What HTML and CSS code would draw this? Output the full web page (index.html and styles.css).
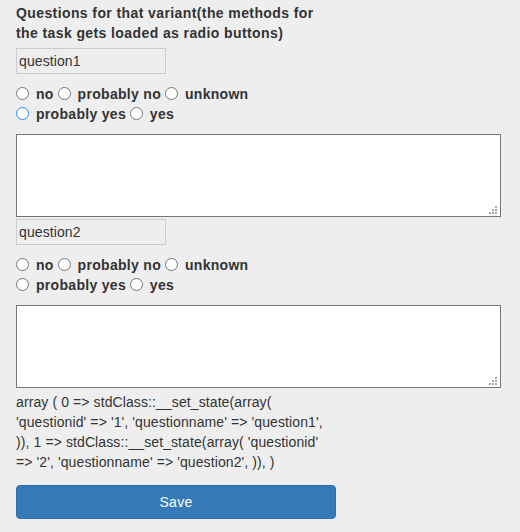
FILE: index.html
```html
<!DOCTYPE html>
<html>
<head>
<meta charset="utf-8">
<link rel="stylesheet" href="styles.css">
</head>
<body>
<form class="page">
  <div class="title">Questions for that variant(the methods for the task gets loaded as radio buttons)</div>

  <input class="qname" type="text" value="question1" disabled>
  <div class="choices">
    <label class="opt"><input type="radio" name="q1"><span>no</span></label>
    <label class="opt"><input type="radio" name="q1"><span>probably no</span></label>
    <label class="opt"><input type="radio" name="q1"><span>unknown</span></label>
    <label class="opt"><input type="radio" name="q1" class="focus"><span>probably yes</span></label>
    <label class="opt"><input type="radio" name="q1"><span>yes</span></label>
  </div>
  <div class="answer-wrap">
    <textarea class="answer"></textarea>
    <svg class="grip" width="8" height="8" viewBox="0 0 8 8"><rect x="6" y="0" width="2" height="2"/><rect x="3" y="3" width="2" height="2"/><rect x="6" y="3" width="2" height="2"/><rect x="0" y="6" width="2" height="2"/><rect x="3" y="6" width="2" height="2"/><rect x="6" y="6" width="2" height="2"/></svg>
  </div>

  <input class="qname" type="text" value="question2" disabled>
  <div class="choices">
    <label class="opt"><input type="radio" name="q2"><span>no</span></label>
    <label class="opt"><input type="radio" name="q2"><span>probably no</span></label>
    <label class="opt"><input type="radio" name="q2"><span>unknown</span></label>
    <label class="opt"><input type="radio" name="q2"><span>probably yes</span></label>
    <label class="opt"><input type="radio" name="q2"><span>yes</span></label>
  </div>
  <div class="answer-wrap">
    <textarea class="answer"></textarea>
    <svg class="grip" width="8" height="8" viewBox="0 0 8 8"><rect x="6" y="0" width="2" height="2"/><rect x="3" y="3" width="2" height="2"/><rect x="6" y="3" width="2" height="2"/><rect x="0" y="6" width="2" height="2"/><rect x="3" y="6" width="2" height="2"/><rect x="6" y="6" width="2" height="2"/></svg>
  </div>

  <div class="dump">array ( 0 =&gt; stdClass::__set_state(array( 'questionid' =&gt; '1', 'questionname' =&gt; 'question1', )), 1 =&gt; stdClass::__set_state(array( 'questionid' =&gt; '2', 'questionname' =&gt; 'question2', )), )</div>

  <button class="save" type="button">Save</button>
</form>
</body>
</html>
```

FILE: styles.css
```css
html, body {
  margin: 0;
  padding: 0;
  background: #eeeeee;
}
body {
  font-family: "Liberation Sans", Arial, sans-serif;
  font-size: 14px;
  line-height: 20px;
  color: #333333;
}
.page {
  display: flex;
  flex-direction: column;
  align-items: flex-start;
  padding: 3px 0 0 16px;
  margin: 0;
}
.title {
  font-weight: bold;
  width: 320px;
  letter-spacing: 0.4px;
}
.qname {
  box-sizing: border-box;
  width: 150px;
  height: 26px;
  margin: 5px 0 0 0;
  padding: 0 2px;
  border: 1px solid #cccccc;
  background: #eeeeee;
  font-family: "Liberation Sans", Arial, sans-serif;
  font-size: 14px;
  letter-spacing: 0.1px;
  color: #333333;
}
.choices {
  width: 260px;
  margin-top: 10px;
  line-height: 20px;
}
.opt {
  font-weight: bold;
  white-space: nowrap;
  letter-spacing: 0.3px;
}
.opt input {
  -webkit-appearance: none;
  appearance: none;
  box-sizing: border-box;
  width: 13px;
  height: 13px;
  margin: 0 4px 0 0;
  border: 1px solid #767676;
  border-radius: 50%;
  background: #ffffff;
  vertical-align: -1px;
}
.opt input.focus {
  border-color: #1a8cff;
}
.opt span {
  margin-left: 3px;
}
.answer-wrap {
  position: relative;
  margin-top: 10px;
  line-height: 0;
}
.answer {
  box-sizing: border-box;
  display: block;
  width: 485px;
  height: 83px;
  margin: 0;
  border: 1px solid #767676;
  background: #ffffff;
  resize: none;
}
.grip {
  position: absolute;
  right: 4px;
  bottom: 3px;
  fill: #a8a8a8;
}
.answer-wrap + .qname {
  margin-top: 2px;
}
.dump {
  width: 322px;
  margin-top: 4px;
  letter-spacing: 0.1px;
}
.save {
  width: 320px;
  height: 34px;
  margin-top: 13px;
  background: #337ab7;
  border: 1px solid #2e6da4;
  border-radius: 4px;
  color: #ffffff;
  font-family: "Liberation Sans", Arial, sans-serif;
  font-size: 14px;
  letter-spacing: 0.3px;
}
```
